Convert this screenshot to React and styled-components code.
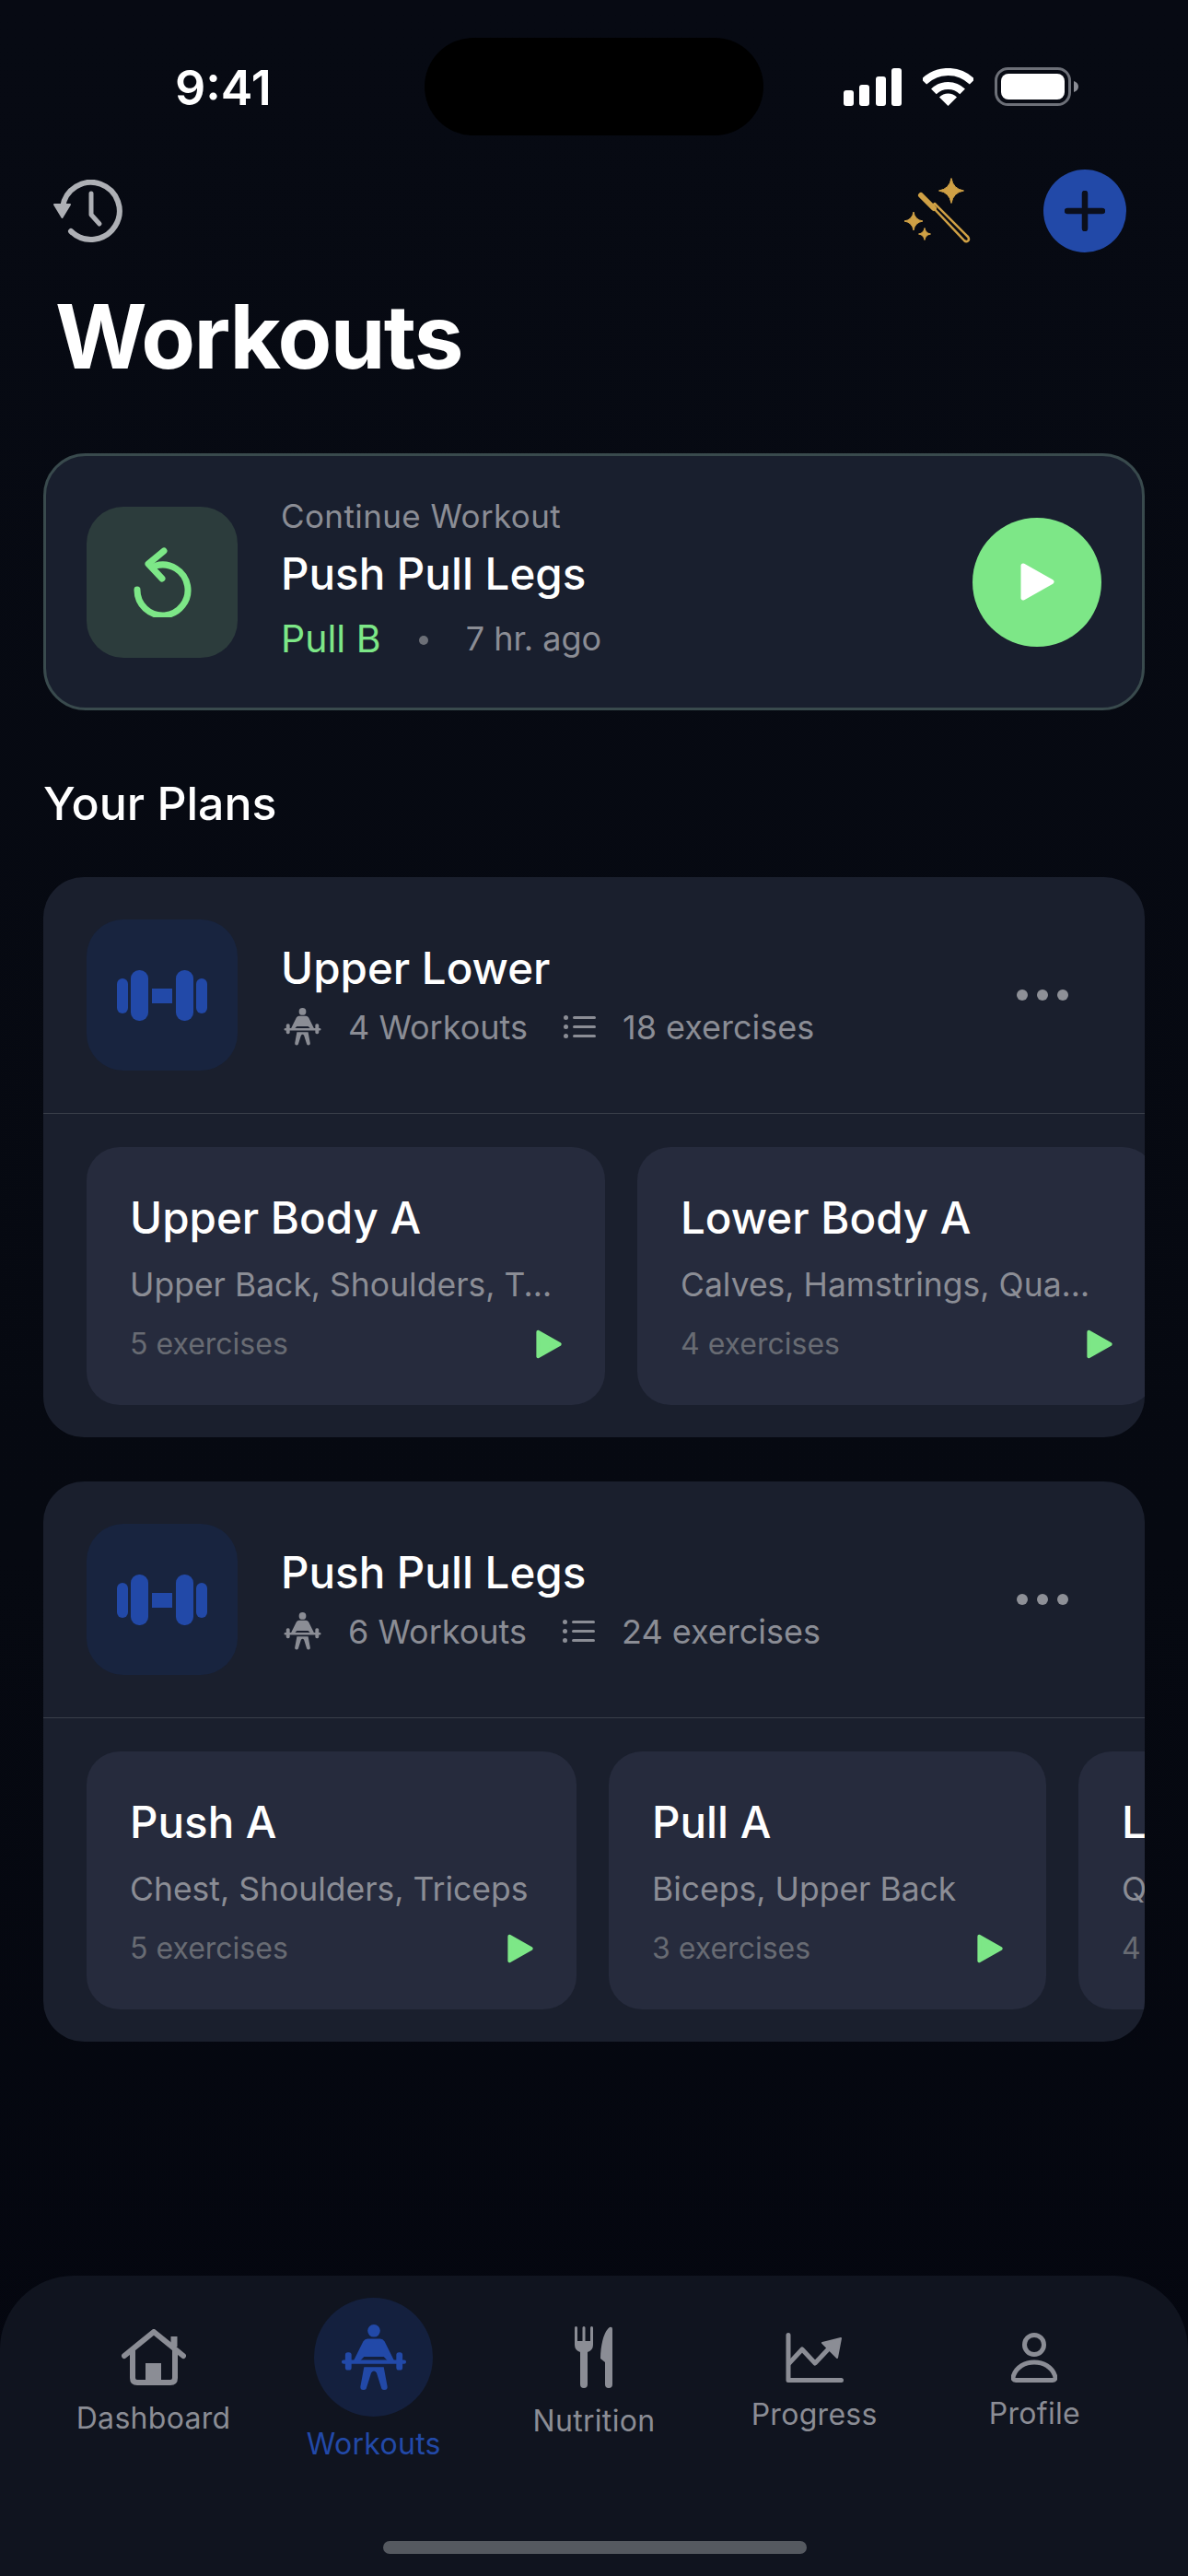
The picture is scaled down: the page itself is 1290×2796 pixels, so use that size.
import React from 'react';
import styled, { createGlobalStyle } from 'styled-components';

const GlobalStyle = createGlobalStyle`
  html, body {
    margin: 0;
    padding: 0;
    background: #060911;
  }
  * {
    box-sizing: border-box;
  }
`;

const GREY = '#8b8d95';
const BLUE = '#2249a8';
const GREEN = '#7de787';

const Page = styled.div`
  width: 1290px;
  height: 2796px;
  display: flex;
  flex-direction: column;
  overflow: hidden;
  font-family: Inter, "Liberation Sans", sans-serif;
  color: #fff;
  background: linear-gradient(180deg, #070a13 0%, #060911 60%, #04060f 100%);
`;

const Content = styled.main`
  flex: 1;
`;

const StatusBar = styled.div`
  height: 147px;
  padding: 41px 119px 0 190px;
  display: flex;
  align-items: center;
`;

const Time = styled.div`
  width: 101px;
  padding-top: 3px;
  font-size: 52px;
  font-weight: 600;
  line-height: 106px;
  white-space: nowrap;
`;

const Island = styled.div`
  width: 368px;
  height: 106px;
  margin-left: 170px;
  border-radius: 53px;
  background: #000;
`;

const StatusIcons = styled.div`
  width: 255px;
  margin-left: auto;
  display: flex;
  align-items: center;
  justify-content: space-between;
`;

const Svg = styled.svg`
  display: block;
  flex-shrink: 0;
`;

const HeaderRow = styled.div`
  margin-top: 37px;
  height: 90px;
  padding: 0 67px 0 58px;
  display: flex;
  align-items: center;
  justify-content: space-between;
`;

const HeaderActions = styled.div`
  display: flex;
  align-items: center;
  gap: 77px;
`;

const AddButton = styled.div`
  width: 90px;
  height: 90px;
  border-radius: 50%;
  background: ${BLUE};
  display: flex;
  align-items: center;
  justify-content: center;
`;

const Title = styled.h1`
  margin: 43px 0 0 60px;
  font-size: 96px;
  font-weight: 700;
  line-height: 96px;
  letter-spacing: -1.6px;
`;

const Section = styled.section`
  padding: 0 47px;
`;

const ContinueCard = styled.div`
  margin-top: 79px;
  height: 279px;
  padding: 0 44px;
  display: flex;
  align-items: center;
  border: 3px solid #394a4d;
  border-radius: 46px;
  background: #191f2e;
`;

const IconBox = styled.div`
  width: 164px;
  height: 164px;
  flex-shrink: 0;
  border-radius: 40px;
  background: ${(p) => p.$bg};
  display: flex;
  align-items: center;
  justify-content: center;
`;

const ContinueText = styled.div`
  margin-left: 47px;
  padding-bottom: 9px;
  flex: 1;
  display: flex;
  flex-direction: column;
`;

const ContinueLabel = styled.div`
  font-size: 35px;
  line-height: 44px;
  letter-spacing: 0.4px;
  color: ${GREY};
`;

const PlanName = styled.div`
  font-size: 47.5px;
  font-weight: 500;
  line-height: 60px;
  margin-top: ${(p) => p.$top || 0}px;
`;

const ContinueMeta = styled.div`
  margin-top: 17px;
  display: flex;
  align-items: center;
  font-size: 36px;
  line-height: 46px;
  color: ${GREY};
`;

const GreenText = styled.span`
  font-size: 41px;
  color: ${GREEN};
`;

const Dot = styled.span`
  width: 10px;
  height: 10px;
  margin: 4px 41px 0 41px;
  border-radius: 50%;
  background: #6c6f77;
`;

const PlayButton = styled.div`
  width: 140px;
  height: 140px;
  border-radius: 50%;
  background: ${GREEN};
  display: flex;
  align-items: center;
  justify-content: center;
`;

const SectionTitle = styled.h2`
  margin: 71px 0 50px;
  padding: 0 47px;
  font-size: 50px;
  font-weight: 500;
  line-height: 60px;
`;

const PlanCard = styled.div`
  height: 608px;
  margin-bottom: 48px;
  border-radius: 44px;
  background: #1a1f2d;
  overflow: hidden;
`;

const PlanHeader = styled.div`
  height: 257px;
  padding: 0 83px 0 47px;
  display: flex;
  align-items: center;
  border-bottom: 1px solid #3a3f4a;
`;

const PlanInfo = styled.div`
  margin-left: 47px;
  padding-bottom: 3px;
  flex: 1;
`;

const PlanMeta = styled.div`
  margin-top: 12px;
  padding-left: 3px;
  display: flex;
  align-items: center;
  font-size: 36px;
  line-height: 44px;
  color: ${GREY};
`;

const MetaText = styled.span`
  margin: 0 39px 0 29px;
`;

const MoreDots = styled.div`
  display: flex;
  gap: 10px;
  span {
    width: 12px;
    height: 12px;
    border-radius: 50%;
    background: #8e9097;
  }
`;

const DayRow = styled.div`
  padding: 36px 0 0 47px;
  display: flex;
  gap: 35px;
`;

const DayCard = styled.div`
  width: ${(p) => p.$width}px;
  height: 280px;
  flex-shrink: 0;
  padding: 53px 47px 0;
  border-radius: 36px;
  background: #262b3d;
`;

const DayTitle = styled.div`
  font-size: 47.5px;
  font-weight: 500;
  line-height: 48px;
  white-space: nowrap;
`;

const DayMuscles = styled.div`
  max-width: ${(p) => p.$maxWidth || 469}px;
  margin-top: 27px;
  font-size: 35.5px;
  line-height: 44px;
  color: ${GREY};
  white-space: nowrap;
  overflow: hidden;
  text-overflow: ellipsis;
`;

const DayFooter = styled.div`
  margin-top: 20px;
  display: flex;
  align-items: center;
  justify-content: space-between;
  font-size: 32px;
  line-height: 44px;
  color: #686b73;
`;

const TabBar = styled.nav`
  height: 326px;
  padding: 0 47px;
  position: relative;
  display: grid;
  grid-template-columns: repeat(5, 1fr);
  align-items: start;
  border-radius: 80px 80px 0 0;
  background: #10141f;
`;

const TabItem = styled.div`
  padding-top: ${(p) => p.$top}px;
  display: flex;
  flex-direction: column;
  align-items: center;
  gap: ${(p) => p.$gap || 16}px;
  color: ${(p) => (p.$active ? BLUE : GREY)};
`;

const TabLabel = styled.div`
  font-size: 32px;
  line-height: 40px;
  letter-spacing: 0.3px;
  white-space: nowrap;
`;

const ActiveCircle = styled.div`
  width: 129px;
  height: 129px;
  border-radius: 50%;
  background: #14203e;
  display: flex;
  align-items: center;
  justify-content: center;
`;

const HomeIndicator = styled.div`
  position: absolute;
  left: 416px;
  bottom: 24px;
  width: 460px;
  height: 14px;
  border-radius: 7px;
  background: #555960;
`;

const SignalIcon = () => (
  <Svg width="63" height="41" viewBox="0 0 63 41" fill="#fff">
    <rect x="0" y="24" width="11" height="17" rx="3" />
    <rect x="17" y="18" width="11" height="23" rx="3" />
    <rect x="35" y="9" width="11" height="32" rx="3" />
    <rect x="52" y="0" width="11" height="41" rx="3" />
  </Svg>
);

const WifiIcon = () => (
  <Svg width="55" height="41" viewBox="0 0 55 41" fill="none" stroke="#fff">
    <path d="M1.3 14.8A37 37 0 0 1 53.7 14.8" strokeWidth="8" />
    <path d="M11.9 25.4A22 22 0 0 1 43.1 25.4" strokeWidth="8" />
    <path d="M27.5 41L18 31.5A13.4 13.4 0 0 1 37 31.5Z" fill="#fff" stroke="none" />
  </Svg>
);

const BatteryIcon = () => (
  <Svg width="91" height="42" viewBox="0 0 91 42" fill="none">
    <rect x="1.5" y="1.5" width="80" height="39" rx="13" stroke="#6d7078" strokeWidth="3" />
    <rect x="7" y="7" width="69" height="28" rx="8" fill="#fff" />
    <path d="M86 15c3 1 5 3 5 6s-2 5-5 6z" fill="#8b8d95" />
  </Svg>
);

const HistoryIcon = () => (
  <Svg width="75" height="68" viewBox="0 0 75 68" fill="none" stroke="#aeb0b5" strokeWidth="6" strokeLinecap="round" strokeLinejoin="round">
    <path d="M10 30A31 31 0 1 1 19 56" />
    <path d="M1 27H18L9.5 41Z" fill="#aeb0b5" strokeWidth="2" />
    <path d="M41 15V38L50 48" strokeWidth="5" />
  </Svg>
);

// four-pointed star with concave sides
const sparkle = (cx, cy, r) => {
  const k = r * 0.14;
  return `M${cx} ${cy - r}Q${cx + k} ${cy - k} ${cx + r} ${cy}Q${cx + k} ${cy + k} ${cx} ${cy + r}Q${cx - k} ${cy + k} ${cx - r} ${cy}Q${cx - k} ${cy - k} ${cx} ${cy - r}Z`;
};

const WandIcon = () => (
  <Svg width="76" height="76" viewBox="0 0 76 76" fill="none">
    <g fill="#cfa045" stroke="#cfa045" strokeWidth="1" strokeLinejoin="round">
      <path d={sparkle(53, 16, 13.5)} />
      <path d={sparkle(12, 49, 10)} />
      <path d={sparkle(24, 63, 6.5)} />
    </g>
    <path d="M20 21L34 35" stroke="#cfa045" strokeWidth="6" strokeLinecap="round" />
    <path d="M32 33L35 30L71 66Q73 69 71 70.5Q69 72 67 70Z" stroke="#cfa045" strokeWidth="2.5" strokeLinejoin="round" />
  </Svg>
);

const PlusIcon = () => (
  <Svg width="44" height="44" viewBox="0 0 44 44" stroke="#0b0f1c" strokeWidth="6.5" strokeLinecap="round">
    <path d="M22 3V41M3 22H41" />
  </Svg>
);

const ReplayIcon = () => (
  <Svg width="63" height="76" viewBox="0 0 63 76" fill="none" stroke={GREEN} strokeWidth="7" strokeLinecap="round" strokeLinejoin="round">
    <path d="M24 20A27.5 27.5 0 1 1 4 46" />
    <path d="M33 4L16 18L31 34" />
  </Svg>
);

const PlayIcon = ({ width, height, color }) => (
  <Svg width={width} height={height} viewBox="0 0 37 41" fill={color} stroke={color} strokeWidth="5" strokeLinejoin="round">
    <path d="M3 3L34 20.5L3 38Z" />
  </Svg>
);

const DumbbellIcon = () => (
  <Svg width="98" height="55" viewBox="0 0 98 55" fill={BLUE}>
    <rect x="0" y="9" width="12" height="38" rx="6" />
    <rect x="15" y="0" width="19" height="55" rx="9" />
    <rect x="38" y="20" width="22" height="16" />
    <rect x="64" y="0" width="19" height="55" rx="9" />
    <rect x="86" y="9" width="12" height="38" rx="6" />
  </Svg>
);

const LifterIcon = ({ size, color }) => (
  <Svg width={size} height={size} viewBox="0 0 72 74" fill={color}>
    <circle cx="36" cy="7" r="7" />
    <path d="M29 16H43Q46 16 48 19L59 41H52L47 36H25L20 41H13L24 19Q26 16 29 16Z" />
    <rect x="0" y="39.5" width="72" height="4.5" rx="2.2" />
    <rect x="4" y="31" width="7" height="20" rx="3" />
    <rect x="61" y="31" width="7" height="20" rx="3" />
    <path d="M25 47.500H47L51 69A3.5 3.5 0 0 1 44 70L39 54Q36 50 33 54L28 70A3.5 3.5 0 0 1 21 69Z" />
  </Svg>
);

const ListIcon = () => (
  <Svg width="35" height="25" viewBox="0 0 35 25" fill={GREY}>
    <circle cx="2.5" cy="2.5" r="2.5" />
    <circle cx="2.5" cy="12.5" r="2.5" />
    <circle cx="2.5" cy="22.5" r="2.5" />
    <rect x="10" y="1" width="25" height="3" rx="1.5" />
    <rect x="10" y="11" width="25" height="3" rx="1.5" />
    <rect x="10" y="21" width="25" height="3" rx="1.5" />
  </Svg>
);

const HomeIcon = () => (
  <Svg width="70" height="61" viewBox="0 0 70 61" fill="none" stroke={GREY} strokeWidth="6" strokeLinecap="round" strokeLinejoin="round">
    <path d="M3 29L35 3L67 29" />
    <path d="M12 24V53Q12 58 17 58H53Q58 58 58 53V24" />
    <path d="M57 8V19" strokeWidth="7" strokeLinecap="butt" />
    <rect x="26" y="37" width="17" height="24" fill={GREY} stroke="none" />
  </Svg>
);

const CutleryIcon = () => (
  <Svg width="41" height="67" viewBox="0 0 41 67" fill={GREY}>
    <path d="M0 1.5a1.5 1.5 0 0 1 3 0V16H8.5V1.5a1.5 1.5 0 0 1 3 0V16H17V1.5a1.5 1.5 0 0 1 3 0V20Q20 26 14 28V63a4 4 0 0 1-8 0V28Q0 26 0 20Z" />
    <path d="M41 3V63a4 4 0 0 1-8 0V39L28 35C28 20 32 5 38 1Q41 0 41 3Z" />
  </Svg>
);

const ChartIcon = () => (
  <Svg width="63" height="54" viewBox="0 0 63 54" fill="none" stroke={GREY} strokeWidth="5" strokeLinecap="round" strokeLinejoin="round">
    <path d="M3 2.5V51.5H60.5" />
    <path d="M4 33L18 18L32 33L49 15" />
    <path d="M40 11L60 6L56 27Z" fill={GREY} strokeWidth="2" />
  </Svg>
);

const PersonIcon = () => (
  <Svg width="50" height="54" viewBox="0 0 50 54" fill="none" stroke={GREY} strokeWidth="5">
    <ellipse cx="25" cy="13" rx="10.5" ry="10.5" />
    <path d="M5 51.5H45Q49 51.5 47.5 46.5C44 37 35 32 25 32C15 32 6 37 2.5 46.5Q1 51.5 5 51.5Z" />
  </Svg>
);

const plans = [
  {
    name: 'Upper Lower',
    workouts: '4 Workouts',
    exercises: '18 exercises',
    days: [
      { title: 'Upper Body A', muscles: 'Upper Back, Shoulders, Triceps', count: '5 exercises', width: 563 },
      { title: 'Lower Body A', muscles: 'Calves, Hamstrings, Quads, Glutes', count: '4 exercises', width: 563, maxWidth: 452 },
    ],
  },
  {
    name: 'Push Pull Legs',
    workouts: '6 Workouts',
    exercises: '24 exercises',
    days: [
      { title: 'Push A', muscles: 'Chest, Shoulders, Triceps', count: '5 exercises', width: 532 },
      { title: 'Pull A', muscles: 'Biceps, Upper Back', count: '3 exercises', width: 475 },
      { title: 'Legs A', muscles: 'Quads, Hamstrings', count: '4 exercises', width: 475 },
    ],
  },
];

const App = () => (
  <Page>
    <GlobalStyle />
    <Content>
      <StatusBar>
        <Time>9:41</Time>
        <Island />
        <StatusIcons>
          <SignalIcon />
          <WifiIcon />
          <BatteryIcon />
        </StatusIcons>
      </StatusBar>

      <HeaderRow>
        <HistoryIcon />
        <HeaderActions>
          <WandIcon />
          <AddButton>
            <PlusIcon />
          </AddButton>
        </HeaderActions>
      </HeaderRow>

      <Title>Workouts</Title>

      <Section>
        <ContinueCard>
          <IconBox $bg="#2c3c3c">
            <ReplayIcon />
          </IconBox>
          <ContinueText>
            <ContinueLabel>Continue Workout</ContinueLabel>
            <PlanName $top={11}>Push Pull Legs</PlanName>
            <ContinueMeta>
              <GreenText>Pull B</GreenText>
              <Dot />
              7 hr. ago
            </ContinueMeta>
          </ContinueText>
          <PlayButton>
            <PlayIcon width={37} height={41} color="#fff" />
          </PlayButton>
        </ContinueCard>
      </Section>

      <SectionTitle>Your Plans</SectionTitle>

      <Section>
        {plans.map((plan) => (
          <PlanCard key={plan.name}>
            <PlanHeader>
              <IconBox $bg="#18243f">
                <DumbbellIcon />
              </IconBox>
              <PlanInfo>
                <PlanName>{plan.name}</PlanName>
                <PlanMeta>
                  <LifterIcon size={41} color={GREY} />
                  <MetaText>{plan.workouts}</MetaText>
                  <ListIcon />
                  <MetaText>{plan.exercises}</MetaText>
                </PlanMeta>
              </PlanInfo>
              <MoreDots>
                <span />
                <span />
                <span />
              </MoreDots>
            </PlanHeader>
            <DayRow>
              {plan.days.map((day) => (
                <DayCard key={day.title} $width={day.width}>
                  <DayTitle>{day.title}</DayTitle>
                  <DayMuscles $maxWidth={day.maxWidth}>{day.muscles}</DayMuscles>
                  <DayFooter>
                    {day.count}
                    <PlayIcon width={28} height={32} color={GREEN} />
                  </DayFooter>
                </DayCard>
              ))}
            </DayRow>
          </PlanCard>
        ))}
      </Section>
    </Content>

    <TabBar>
      <TabItem $top={58}>
        <HomeIcon />
        <TabLabel>Dashboard</TabLabel>
      </TabItem>
      <TabItem $top={24} $gap={10} $active>
        <ActiveCircle>
          <LifterIcon size={72} color={BLUE} />
        </ActiveCircle>
        <TabLabel>Workouts</TabLabel>
      </TabItem>
      <TabItem $top={55}>
        <CutleryIcon />
        <TabLabel>Nutrition</TabLabel>
      </TabItem>
      <TabItem $top={62} $gap={15}>
        <ChartIcon />
        <TabLabel>Progress</TabLabel>
      </TabItem>
      <TabItem $top={62} $gap={14}>
        <PersonIcon />
        <TabLabel>Profile</TabLabel>
      </TabItem>
      <HomeIndicator />
    </TabBar>
  </Page>
);

export default App;
